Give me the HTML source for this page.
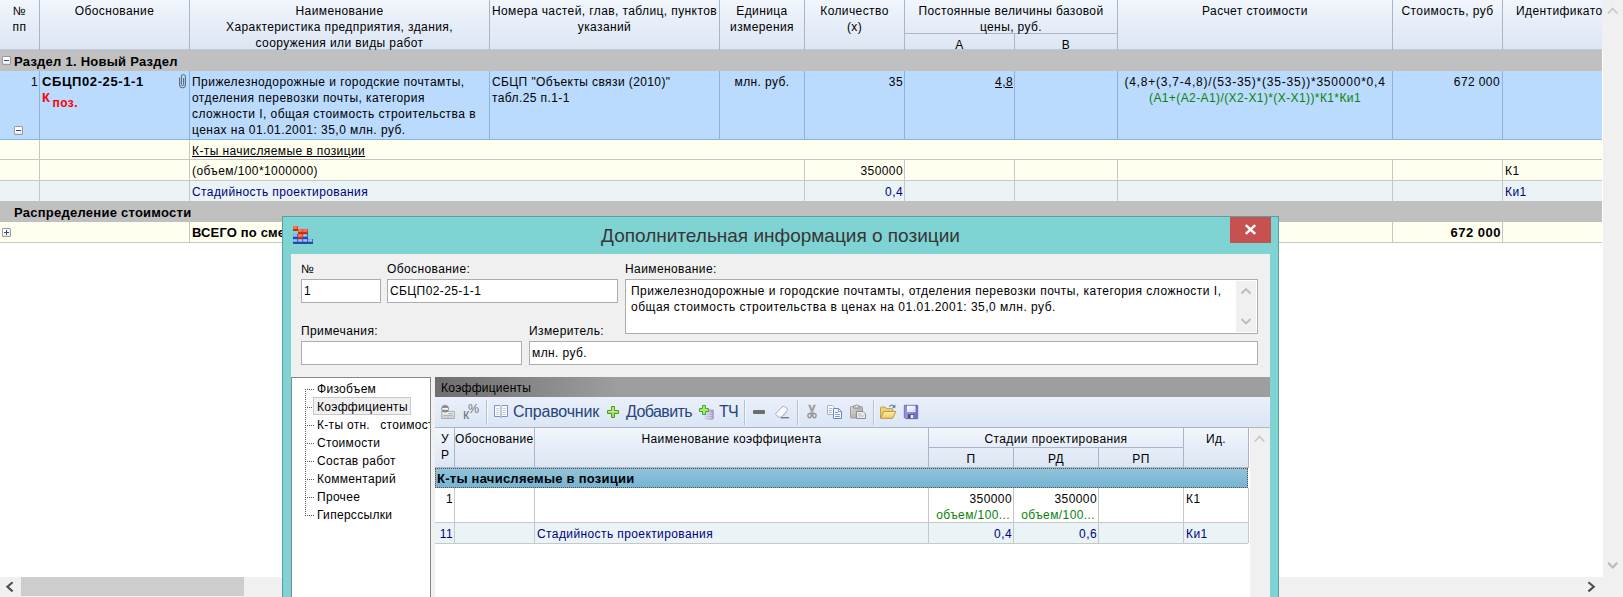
<!DOCTYPE html>
<html lang="ru">
<head>
<meta charset="utf-8">
<title>Дополнительная информация о позиции</title>
<style>
html,body{margin:0;padding:0;}
body{width:1623px;height:597px;overflow:hidden;background:#fff;position:relative;font-family:"Liberation Sans",sans-serif;font-size:12px;color:#000;letter-spacing:0.4px;}
.a{position:absolute;}
.t{position:absolute;white-space:nowrap;line-height:16px;}
.b{font-weight:bold;font-size:13px;letter-spacing:0.5px;}
.c{text-align:center;}
.r{text-align:right;}
.vl{position:absolute;width:1px;}
.hl{position:absolute;height:1px;}
.navy{color:#000080;}
.green{color:#0a820a;}
.pm{position:absolute;width:7px;height:7px;border:1px solid #9a9a9a;background:linear-gradient(#fff 55%,#e4e4e4);border-radius:1px;}
.pm i{position:absolute;left:1px;top:3px;width:5px;height:1px;background:#3048a0;}
.pm b{position:absolute;left:3px;top:1px;width:1px;height:5px;background:#3048a0;}
.inp{position:absolute;background:#fff;border:1px solid #abadb3;box-sizing:border-box;}
</style>
</head>
<body>

<!-- ================= MAIN GRID ================= -->
<div id="grid" class="a" style="left:0;top:0;width:1603px;height:577px;background:#fff;overflow:hidden;">
  <!-- header -->
  <div class="a" style="left:0;top:0;width:1602px;height:50px;background:linear-gradient(#f2f6fc,#e6edf8 50%,#dce6f3);"></div>
  <div class="hl" style="left:0;top:49px;width:1602px;background:#bcc8dc;"></div>
  <div class="vl" style="left:39px;top:0;height:50px;background:#a9b6ca;"></div>
  <div class="vl" style="left:189px;top:0;height:50px;background:#a9b6ca;"></div>
  <div class="vl" style="left:489px;top:0;height:50px;background:#a9b6ca;"></div>
  <div class="vl" style="left:719px;top:0;height:50px;background:#a9b6ca;"></div>
  <div class="vl" style="left:804px;top:0;height:50px;background:#a9b6ca;"></div>
  <div class="vl" style="left:904px;top:0;height:50px;background:#a9b6ca;"></div>
  <div class="vl" style="left:1014px;top:33px;height:17px;background:#a9b6ca;"></div>
  <div class="vl" style="left:1117px;top:0;height:50px;background:#a9b6ca;"></div>
  <div class="vl" style="left:1392px;top:0;height:50px;background:#a9b6ca;"></div>
  <div class="vl" style="left:1502px;top:0;height:50px;background:#a9b6ca;"></div>
  <div class="hl" style="left:904px;top:33px;width:213px;background:#a9b6ca;"></div>

  <div class="a" style="left:1602px;top:0;width:1px;height:50px;background:#f0f0f0;"></div>
  <div class="t c" style="left:0;top:3px;width:39px;white-space:normal;">№<br>пп</div>
  <div class="t c" style="left:40px;top:3px;width:149px;">Обоснование</div>
  <div class="t c" style="left:190px;top:3px;width:299px;">Наименование<br>Характеристика предприятия, здания,<br>сооружения или виды работ</div>
  <div class="t c" style="left:490px;top:3px;width:229px;">Номера частей, глав, таблиц, пунктов<br>указаний</div>
  <div class="t c" style="left:720px;top:3px;width:84px;">Единица<br>измерения</div>
  <div class="t c" style="left:805px;top:3px;width:99px;">Количество<br>(x)</div>
  <div class="t c" style="left:905px;top:3px;width:212px;">Постоянные величины базовой<br>цены, руб.</div>
  <div class="t c" style="left:905px;top:37px;width:109px;">А</div>
  <div class="t c" style="left:1015px;top:37px;width:102px;">В</div>
  <div class="t c" style="left:1118px;top:3px;width:274px;">Расчет стоимости</div>
  <div class="t c" style="left:1393px;top:3px;width:109px;">Стоимость, руб</div>
  <div class="t" style="left:1516px;top:3px;">Идентификатор</div>

  <!-- section row -->
  <div class="a" style="left:0;top:50px;width:1602px;height:21px;background:#c0c0c0;"></div>
  <div class="pm" style="left:2px;top:56px;"><i></i></div>
  <div class="t b" style="left:14px;top:54px;letter-spacing:0.25px;">Раздел 1. Новый Раздел</div>

  <!-- selected row -->
  <div class="a" style="left:0;top:71px;width:1602px;height:69px;background:#badbfd;"></div>
  <div class="hl" style="left:0;top:139px;width:1602px;background:#8db2dc;"></div>
  <div class="vl" style="left:39px;top:71px;height:69px;background:#8db2dc;"></div>
  <div class="vl" style="left:189px;top:71px;height:69px;background:#8db2dc;"></div>
  <div class="vl" style="left:489px;top:71px;height:69px;background:#8db2dc;"></div>
  <div class="vl" style="left:719px;top:71px;height:69px;background:#8db2dc;"></div>
  <div class="vl" style="left:804px;top:71px;height:69px;background:#8db2dc;"></div>
  <div class="vl" style="left:904px;top:71px;height:69px;background:#8db2dc;"></div>
  <div class="vl" style="left:1014px;top:71px;height:69px;background:#8db2dc;"></div>
  <div class="vl" style="left:1117px;top:71px;height:69px;background:#8db2dc;"></div>
  <div class="vl" style="left:1392px;top:71px;height:69px;background:#8db2dc;"></div>
  <div class="vl" style="left:1502px;top:71px;height:69px;background:#8db2dc;"></div>

  <div class="t r" style="left:0;top:74px;width:38px;">1</div>
  <div class="pm" style="left:14px;top:126px;"><i></i></div>
  <div class="t b" style="left:42px;top:74px;letter-spacing:0.6px;">СБЦП02-25-1-1</div>
  <div class="t b" style="left:42px;top:90px;color:#ff0000;">К<span style="font-size:12px;position:relative;top:5px;left:2px;">поз.</span></div>
  <svg class="a" style="left:178px;top:73px;" width="10" height="16" viewBox="0 0 10 16"><path d="M1.6 4.6 V12 A2.9 2.9 0 0 0 7.4 12 V3.6 A2 2 0 0 0 3.4 3.6 V11.6 A1.1 1.1 0 0 0 5.6 11.6 V5" fill="none" stroke="#4c5c6e" stroke-width="0.95"/></svg>
  <div class="t" style="left:192px;top:74px;letter-spacing:0.46px;">Прижелезнодорожные и городские почтамты,<br>отделения перевозки почты, категория<br>сложности I, общая стоимость строительства в<br>ценах на 01.01.2001: 35,0 млн. руб.</div>
  <div class="t" style="left:492px;top:74px;">СБЦП "Объекты связи (2010)"<br>табл.25 п.1-1</div>
  <div class="t c" style="left:720px;top:74px;width:84px;">млн. руб.</div>
  <div class="t r" style="left:805px;top:74px;width:98px;">35</div>
  <div class="t r" style="left:905px;top:74px;width:108px;text-decoration:underline;">4,8</div>
  <div class="t c" style="left:1118px;top:74px;width:274px;"><span style="letter-spacing:0.78px;">(4,8+(3,7-4,8)/(53-35)*(35-35))*350000*0,4</span><br><span class="green">(А1+(А2-А1)/(Х2-Х1)*(Х-Х1))*К1*Ки1</span></div>
  <div class="t r" style="left:1393px;top:74px;width:107px;">672 000</div>

  <!-- K-ty row -->
  <div class="a" style="left:0;top:140px;width:1602px;height:20px;background:#fffff0;"></div>
  <div class="hl" style="left:0;top:159px;width:1602px;background:#c6c6c6;"></div>
  <div class="vl" style="left:39px;top:140px;height:20px;background:#c6c6c6;"></div>
  <div class="vl" style="left:189px;top:140px;height:20px;background:#c6c6c6;"></div>
  <div class="t" style="left:192px;top:143px;text-decoration:underline;">К-ты начисляемые в позиции</div>

  <!-- objem row -->
  <div class="a" style="left:0;top:160px;width:1602px;height:21px;background:#fffff0;"></div>
  <div class="hl" style="left:0;top:180px;width:1602px;background:#c6c6c6;"></div>
  <div class="t" style="left:192px;top:163px;">(объем/100*1000000)</div>
  <div class="t r" style="left:805px;top:163px;width:98px;">350000</div>
  <div class="t" style="left:1505px;top:163px;">К1</div>

  <!-- stadiynost row -->
  <div class="a" style="left:0;top:181px;width:1602px;height:20px;background:#eaf4f6;"></div>
  <div class="t navy" style="left:192px;top:184px;">Стадийность проектирования</div>
  <div class="t r navy" style="left:805px;top:184px;width:98px;">0,4</div>
  <div class="t navy" style="left:1505px;top:184px;">Ки1</div>

  <!-- vertical lines for the two rows -->
  <div class="vl" style="left:39px;top:160px;height:41px;background:#c6c6c6;"></div>
  <div class="vl" style="left:189px;top:160px;height:41px;background:#c6c6c6;"></div>
  <div class="vl" style="left:804px;top:160px;height:41px;background:#c6c6c6;"></div>
  <div class="vl" style="left:904px;top:160px;height:41px;background:#c6c6c6;"></div>
  <div class="vl" style="left:1014px;top:160px;height:41px;background:#c6c6c6;"></div>
  <div class="vl" style="left:1117px;top:160px;height:41px;background:#c6c6c6;"></div>
  <div class="vl" style="left:1392px;top:160px;height:41px;background:#c6c6c6;"></div>
  <div class="vl" style="left:1502px;top:160px;height:41px;background:#c6c6c6;"></div>

  <!-- raspredelenie row -->
  <div class="a" style="left:0;top:201px;width:1602px;height:21px;background:#c0c0c0;"></div>
  <div class="t b" style="left:14px;top:205px;letter-spacing:0.25px;">Распределение стоимости</div>

  <!-- vsego row -->
  <div class="a" style="left:0;top:222px;width:1602px;height:21px;background:#fffff0;"></div>
  <div class="hl" style="left:0;top:242px;width:1602px;background:#c6c6c6;"></div>
  <div class="vl" style="left:189px;top:222px;height:21px;background:#c6c6c6;"></div>
  <div class="vl" style="left:1392px;top:222px;height:21px;background:#c6c6c6;"></div>
  <div class="vl" style="left:1502px;top:222px;height:21px;background:#c6c6c6;"></div>
  <div class="pm" style="left:2px;top:228px;"><i></i><b></b></div>
  <div class="t b" style="left:192px;top:225px;letter-spacing:0.15px;">ВСЕГО по смете</div>
  <div class="t b r" style="left:1393px;top:225px;width:108px;">672 000</div>
</div>

<!-- main scrollbars -->
<div class="a" style="left:1603px;top:0;width:20px;height:597px;background:#f0f0f0;"></div>
<div class="a" style="left:0;top:577px;width:1623px;height:20px;background:#f0f0f0;"></div>
<div class="a" style="left:21px;top:577px;width:223px;height:19px;background:#cdcdcd;"></div>
<svg class="a" style="left:1602px;top:0" width="21" height="20" viewBox="0 0 21 20"><path d="M6 13.5 L10.7 8.5 L15.4 13.5" fill="none" stroke="#c6c6c6" stroke-width="1.7"/></svg>
<svg class="a" style="left:1602px;top:555px" width="21" height="20" viewBox="0 0 21 20"><path d="M6.2 7.7 L10.7 12.6 L15.2 7.7" fill="none" stroke="#b8b8b8" stroke-width="2"/></svg>
<svg class="a" style="left:0;top:577px" width="20" height="20" viewBox="0 0 20 20"><path d="M12.6 5.2 L7.4 9.8 L12.6 14.4" fill="none" stroke="#4c4c4c" stroke-width="2.1"/></svg>
<svg class="a" style="left:1581px;top:577px" width="20" height="20" viewBox="0 0 20 20"><path d="M7.4 5.2 L12.8 9.8 L7.4 14.4" fill="none" stroke="#4c4c4c" stroke-width="2.1"/></svg>

<!-- ================= DIALOG ================= -->
<div id="dlg" class="a" style="left:282px;top:216px;width:997px;height:400px;background:#7fd3d3;box-sizing:border-box;border:1px solid #5a9ea0;">
</div>
<div id="dlgc" class="a" style="left:0;top:0;width:1623px;height:597px;overflow:hidden;">
  <!-- title -->
  <div class="t c" style="left:283px;top:225px;width:995px;font-size:19px;line-height:22px;letter-spacing:0;color:#363636;">Дополнительная информация о позиции</div>
  <!-- close -->
  <div class="a" style="left:1230px;top:217px;width:41px;height:26px;background:#c75050;"></div>
  <svg class="a" style="left:1244px;top:224px" width="13" height="11" viewBox="0 0 13 11"><path d="M1.8 1.2 L11.2 9.8 M11.2 1.2 L1.8 9.8" stroke="#fff" stroke-width="2.5" fill="none"/></svg>
  <!-- app icon -->
  <svg class="a" style="left:293px;top:226px" width="20" height="18" viewBox="0 0 20 18"><rect x="0" y="0" width="5" height="5" fill="#c82808"/><rect x="0" y="0" width="4.6" height="3.2" fill="#f4603c"/><rect x="0.6" y="0.6" width="3" height="1.6" fill="#fa8064"/><rect x="5" y="3" width="5" height="5" fill="#c82808"/><rect x="5" y="3" width="4.6" height="3.2" fill="#f4603c"/><rect x="5.6" y="3.6" width="3" height="1.6" fill="#fa8064"/><rect x="10" y="3" width="5" height="5" fill="#c82808"/><rect x="10" y="3" width="4.6" height="3.2" fill="#f4603c"/><rect x="10.6" y="3.6" width="3" height="1.6" fill="#fa8064"/><rect x="0" y="8" width="5" height="5" fill="#244c9c"/><rect x="0" y="8" width="4.4" height="3" fill="#6c98f0"/><rect x="0.5" y="8.5" width="3.4" height="1.6" fill="#a4c4fc"/><rect x="5" y="8" width="5" height="5" fill="#c82808"/><rect x="5" y="8" width="4.6" height="3.2" fill="#f4603c"/><rect x="5.6" y="8.6" width="3" height="1.6" fill="#fa8064"/><rect x="10" y="8" width="5" height="5" fill="#244c9c"/><rect x="10" y="8" width="4.4" height="3" fill="#6c98f0"/><rect x="10.5" y="8.5" width="3.4" height="1.6" fill="#a4c4fc"/><rect x="0" y="13" width="5" height="5" fill="#244c9c"/><rect x="0" y="13" width="4.4" height="3" fill="#6c98f0"/><rect x="0.5" y="13.5" width="3.4" height="1.6" fill="#a4c4fc"/><rect x="5" y="13" width="5" height="5" fill="#244c9c"/><rect x="5" y="13" width="4.4" height="3" fill="#6c98f0"/><rect x="5.5" y="13.5" width="3.4" height="1.6" fill="#a4c4fc"/><rect x="10" y="13" width="5" height="5" fill="#244c9c"/><rect x="10" y="13" width="4.4" height="3" fill="#6c98f0"/><rect x="10.5" y="13.5" width="3.4" height="1.6" fill="#a4c4fc"/><rect x="15" y="13" width="5" height="5" fill="#244c9c"/><rect x="15" y="13" width="4.4" height="3" fill="#6c98f0"/><rect x="15.5" y="13.5" width="3.4" height="1.6" fill="#a4c4fc"/></svg>

  <!-- client -->
  <div class="a" style="left:291px;top:254px;width:979px;height:343px;background:#f0f0f0;"></div>

  <!-- form labels / inputs -->
  <div class="t" style="left:301px;top:261px;">№</div>
  <div class="t" style="left:387px;top:261px;">Обоснование:</div>
  <div class="t" style="left:625px;top:261px;">Наименование:</div>
  <div class="inp" style="left:301px;top:279px;width:80px;height:24px;"></div>
  <div class="t" style="left:304px;top:283px;">1</div>
  <div class="inp" style="left:387px;top:279px;width:231px;height:24px;"></div>
  <div class="t" style="left:390px;top:283px;">СБЦП02-25-1-1</div>
  <div class="inp" style="left:625px;top:279px;width:633px;height:55px;"></div>
  <div class="a" style="left:1236px;top:281px;width:20px;height:51px;background:#f0f0f0;"></div>
  <svg class="a" style="left:1236px;top:281px" width="20" height="20" viewBox="0 0 20 20"><path d="M5.5 12.5 L10 8 L14.5 12.5" fill="none" stroke="#bcbcbc" stroke-width="1.9"/></svg>
  <svg class="a" style="left:1236px;top:311px" width="20" height="20" viewBox="0 0 20 20"><path d="M5.5 8 L10 12.5 L14.5 8" fill="none" stroke="#bcbcbc" stroke-width="1.9"/></svg>
  <div class="t" style="left:631px;top:283px;letter-spacing:0.49px;">Прижелезнодорожные и городские почтамты, отделения перевозки почты, категория сложности I,<br>общая стоимость строительства в ценах на 01.01.2001: 35,0 млн. руб.</div>
  <div class="t" style="left:301px;top:323px;">Примечания:</div>
  <div class="t" style="left:529px;top:323px;">Измеритель:</div>
  <div class="inp" style="left:301px;top:341px;width:221px;height:24px;"></div>
  <div class="inp" style="left:529px;top:341px;width:729px;height:24px;"></div>
  <div class="t" style="left:532px;top:345px;">млн. руб.</div>

  <!-- tree panel -->
  <div class="a" style="left:291px;top:377px;width:140px;height:230px;background:#fff;border:1px solid #828790;box-sizing:border-box;overflow:hidden;">
    <div class="vl" style="left:13px;top:11px;height:127px;background:repeating-linear-gradient(#5a5a5a 0 1px,transparent 1px 2px);"></div>
    <div class="hl" style="left:13px;top:11px;width:9px;background:repeating-linear-gradient(90deg,#5a5a5a 0 1px,transparent 1px 2px);"></div>
    <div class="hl" style="left:13px;top:29px;width:9px;background:repeating-linear-gradient(90deg,#5a5a5a 0 1px,transparent 1px 2px);"></div>
    <div class="hl" style="left:13px;top:47px;width:9px;background:repeating-linear-gradient(90deg,#5a5a5a 0 1px,transparent 1px 2px);"></div>
    <div class="hl" style="left:13px;top:65px;width:9px;background:repeating-linear-gradient(90deg,#5a5a5a 0 1px,transparent 1px 2px);"></div>
    <div class="hl" style="left:13px;top:83px;width:9px;background:repeating-linear-gradient(90deg,#5a5a5a 0 1px,transparent 1px 2px);"></div>
    <div class="hl" style="left:13px;top:101px;width:9px;background:repeating-linear-gradient(90deg,#5a5a5a 0 1px,transparent 1px 2px);"></div>
    <div class="hl" style="left:13px;top:119px;width:9px;background:repeating-linear-gradient(90deg,#5a5a5a 0 1px,transparent 1px 2px);"></div>
    <div class="hl" style="left:13px;top:137px;width:9px;background:repeating-linear-gradient(90deg,#5a5a5a 0 1px,transparent 1px 2px);"></div>
    <div class="a" style="left:21px;top:19px;width:98px;height:18px;background:#f0f0f0;border:1px solid #c8c8c8;box-sizing:border-box;"></div>
    <div class="t" style="left:25px;top:2px;line-height:18px;letter-spacing:0.3px;">Физобъем<br>Коэффициенты<br>К-ты отн.&nbsp; <span style="margin-left:3px">стоимости</span><br>Стоимости<br>Состав работ<br>Комментарий<br>Прочее<br>Гиперссылки</div>
  </div>

  <!-- right panel -->
  <div class="a" style="left:435px;top:377px;width:835px;height:20px;background:linear-gradient(90deg,#6f6f6f,#787878 40px,#9e9e9e 185px,#9e9e9e);"></div>
  <div class="t" style="left:441px;top:380px;letter-spacing:0.25px;">Коэффициенты</div>
  <!-- toolbar -->
  <div class="a" style="left:435px;top:397px;width:835px;height:31px;background:linear-gradient(#eaf0fa,#dbe5f4);"></div>
  <div class="hl" style="left:435px;top:427px;width:835px;background:#a9b6ca;"></div>
  <div id="tb">
    <!-- stamp icon (disabled) -->
    <svg class="a" style="left:440px;top:404px" width="16" height="16" viewBox="0 0 16 16">
      <defs><linearGradient id="crd" x1="0" x2="0" y1="0" y2="1"><stop offset="0" stop-color="#f6f6f6"/><stop offset="1" stop-color="#cfcfcf"/></linearGradient></defs>
      <rect x="1.7" y="7.6" width="12.6" height="6.8" fill="url(#crd)" stroke="#a4a4a4" stroke-width="0.9"/>
      <path d="M8.5 9.7 H12.6 M3.3 11.7 H12.6" stroke="#a0a0a0" stroke-width="0.9"/>
      <circle cx="5.1" cy="4.7" r="3.5" fill="#8e8e8e"/>
      <circle cx="5.1" cy="4.7" r="3.5" fill="none" stroke="#7c7c7c" stroke-width="0.6"/>
      <rect x="2.1" y="3.9" width="6" height="1.8" rx="0.6" fill="#fdfdfd"/>
    </svg>
    <!-- k% -->
    <div class="t" style="left:463px;top:406px;font-size:14px;color:#747474;letter-spacing:0;">к</div>
    <div class="t" style="left:468px;top:401px;font-size:12.5px;color:#747474;letter-spacing:0;">%</div>
    <div class="vl" style="left:486px;top:400px;height:25px;background:#b4c0d4;"></div>
    <div class="vl" style="left:487px;top:400px;height:25px;background:#f4f8fd;"></div>
    <!-- book -->
    <svg class="a" style="left:493px;top:404px" width="16" height="15" viewBox="0 0 16 15">
      <path d="M1.5 1.5 H7 L8 2.5 L9 1.5 H14.5 V12.5 H9 L8 13.5 L7 12.5 H1.5 Z" fill="#fbfbfd" stroke="#7c90d4" stroke-width="1"/>
      <path d="M8 2.5 V13" stroke="#8a94b8" stroke-width="1"/>
      <path d="M3 4.5 H6.5 M3 6.5 H6.5 M3 8.5 H6.5 M3 10.5 H6.5 M9.5 4.5 H13 M9.5 6.5 H13 M9.5 8.5 H13 M9.5 10.5 H13" stroke="#c0c4d4" stroke-width="0.8"/>
    </svg>
    <div class="t" style="left:513px;top:402px;font-size:16px;line-height:20px;color:#26457a;letter-spacing:-0.2px;">Справочник</div>
    <!-- green plus -->
    <svg class="a" style="left:607px;top:406px" width="12" height="12" viewBox="0 0 12 12"><path d="M4.5 0.5 H7.5 V4.5 H11.5 V7.5 H7.5 V11.5 H4.5 V7.5 H0.5 V4.5 H4.5 Z" fill="#9fdc62" stroke="#46a022" stroke-width="1" stroke-linejoin="round"/><path d="M5.3 1.4 H6.4 V5.3 H10.6 V5.9 H1.4 V5.3 H5.3 Z" fill="#d0f2a8"/></svg>
    <div class="t" style="left:626px;top:402px;font-size:16px;line-height:20px;color:#26457a;letter-spacing:-0.58px;">Добавить</div>
    <!-- plus + db -->
    <svg class="a" style="left:698px;top:404px" width="18" height="17" viewBox="0 0 18 17">
      <defs><linearGradient id="cyl" x1="0" x2="1" y1="0" y2="0"><stop offset="0" stop-color="#d8d6ee"/><stop offset="0.55" stop-color="#bcb8de"/><stop offset="1" stop-color="#8f8bbc"/></linearGradient></defs>
      <path d="M6.3 6.6 V14.2 Q6.3 15.8 11 15.8 Q15.7 15.8 15.7 14.2 V6.6 Q15.7 5.2 11 5.2 Q6.3 5.2 6.3 6.6 Z" fill="url(#cyl)"/>
      <path d="M7 9.2 H14.6 M7 11.4 H14.6 M7 13.6 H14.6" stroke="#e4e2f4" stroke-width="0.8" opacity="0.85"/>
      <path d="M4.5 1.5 H7.5 V4.5 H10.5 V7.5 H7.5 V10.5 H4.5 V7.5 H1.5 V4.5 H4.5 Z" fill="#a4ec78" stroke="#46a632" stroke-width="1" stroke-linejoin="round"/>
    </svg>
    <div class="t" style="left:719px;top:402px;font-size:16px;line-height:20px;color:#26457a;letter-spacing:-0.8px;">ТЧ</div>
    <div class="vl" style="left:744px;top:400px;height:25px;background:#b4c0d4;"></div>
    <div class="vl" style="left:745px;top:400px;height:25px;background:#f4f8fd;"></div>
    <!-- minus -->
    <div class="a" style="left:753px;top:410px;width:12px;height:4px;background:#6e6e6e;border-radius:1px;"></div>
    <!-- eraser -->
    <svg class="a" style="left:774px;top:404px" width="17" height="16" viewBox="0 0 17 16">
      <path d="M2 9.5 L8 3 Q9.2 1.8 10.6 2.6 L13 4.3 Q14 5.4 13 6.6 L7.5 12.8 Q6.2 13.8 4.8 13 L2.4 11.4 Q1.4 10.5 2 9.5 Z" fill="#fafafa" stroke="#98a4c4" stroke-width="0.9"/>
      <path d="M10.2 12 L13.4 8.2 L13 6.6 L7.5 12.8 Z" fill="#c4ccd8" opacity="0.8"/>
      <path d="M7 13.8 H15" stroke="#505058" stroke-width="1"/>
    </svg>
    <div class="vl" style="left:797px;top:400px;height:25px;background:#b4c0d4;"></div>
    <div class="vl" style="left:798px;top:400px;height:25px;background:#f4f8fd;"></div>
    <!-- scissors (disabled) -->
    <svg class="a" style="left:805px;top:404px" width="14" height="16" viewBox="0 0 14 16">
      <path d="M3.6 1 L5.2 1 L8.6 9.6 L7.2 10.4 Z M10.4 1 L8.8 1 L5.4 9.6 L6.8 10.4 Z" fill="#a6a6a6" stroke="#8e8e8e" stroke-width="0.5"/>
      <ellipse cx="4.6" cy="11.6" rx="1.7" ry="2.1" fill="none" stroke="#969696" stroke-width="1.4"/>
      <ellipse cx="9.4" cy="11.6" rx="1.7" ry="2.1" fill="none" stroke="#969696" stroke-width="1.4"/>
    </svg>
    <!-- copy -->
    <svg class="a" style="left:826px;top:404px" width="17" height="16" viewBox="0 0 17 16">
      <path d="M1.5 1.5 H6.5 L8.5 3.5 V10.5 H1.5 Z" fill="#fbfcfe" stroke="#a8b4cc" stroke-width="1"/>
      <path d="M3 4.5 H6.5 M3 6.5 H6 M3 8.5 H6" stroke="#9ab4e4" stroke-width="0.9"/>
      <path d="M7.5 4.5 H12.5 L15.5 7.5 V14.5 H7.5 Z" fill="#f8faff" stroke="#6a84cc" stroke-width="1"/>
      <path d="M12.3 4.6 V7.7 H15.4" fill="none" stroke="#6a84cc" stroke-width="0.8"/>
      <path d="M9 8.5 H12 M9 10.5 H14 M9 12.5 H14" stroke="#6c94e0" stroke-width="0.9"/>
    </svg>
    <!-- paste -->
    <svg class="a" style="left:849px;top:404px" width="18" height="16" viewBox="0 0 18 16">
      <defs><linearGradient id="pst" x1="0" x2="1" y1="0" y2="1"><stop offset="0" stop-color="#dcdcdc"/><stop offset="1" stop-color="#9c9c9c"/></linearGradient></defs>
      <rect x="1.5" y="2.5" width="12" height="11.5" rx="1" fill="url(#pst)" stroke="#9a9a9a" stroke-width="1"/>
      <path d="M4.5 4.2 V2.4 Q4.5 1.6 5.6 1.6 H6.2 Q7.5 -0.2 8.8 1.6 H9.4 Q10.5 1.6 10.5 2.4 V4.2 Z" fill="#c8c8c8" stroke="#858585" stroke-width="0.8"/>
      <circle cx="7.5" cy="2.3" r="0.7" fill="#f4f4f4"/>
      <path d="M7.5 7.5 H14 L16.5 10 V14.5 H7.5 Z" fill="#ececec" stroke="#8e8e8e" stroke-width="1"/>
      <path d="M9 10 H12.5 M9 12 H15" stroke="#b4b4b4" stroke-width="0.9"/>
    </svg>
    <div class="vl" style="left:873px;top:400px;height:25px;background:#b4c0d4;"></div>
    <div class="vl" style="left:874px;top:400px;height:25px;background:#f4f8fd;"></div>
    <!-- folder open -->
    <svg class="a" style="left:879px;top:403px" width="18" height="17" viewBox="0 0 18 17">
      <defs><linearGradient id="fld" x1="0" x2="0" y1="0" y2="1"><stop offset="0" stop-color="#fdeeb0"/><stop offset="1" stop-color="#f2c85c"/></linearGradient></defs>
      <path d="M1.5 15 V5 Q1.5 4 2.5 4 H6 L7.6 5.6 H13 Q13.8 5.6 13.8 6.4 V8.5" fill="#ecd07c" stroke="#c0a048" stroke-width="1"/>
      <path d="M1.6 15.3 L4.8 8.4 H16.8 L13.6 15.3 Z" fill="url(#fld)" stroke="#b8963c" stroke-width="1" stroke-linejoin="round"/>
      <path d="M10.2 3.6 Q12.8 0.6 15.6 3.8" fill="none" stroke="#6a88b8" stroke-width="1.1"/>
      <path d="M16.6 1.6 L16.2 5.2 L13 4.2 Z" fill="#5c7cb0"/>
    </svg>
    <!-- save -->
    <svg class="a" style="left:903px;top:404px" width="16" height="16" viewBox="0 0 16 16">
      <defs><linearGradient id="sv" x1="0" x2="1" y1="0" y2="0"><stop offset="0" stop-color="#9494e6"/><stop offset="1" stop-color="#6c6ccc"/></linearGradient>
      <linearGradient id="svl" x1="0" x2="1" y1="0" y2="1"><stop offset="0" stop-color="#ffffff"/><stop offset="1" stop-color="#d8d8ec"/></linearGradient></defs>
      <path d="M1.3 1.3 H14.7 V14.7 H2.6 L1.3 13.4 Z" fill="url(#sv)" stroke="#6060b8" stroke-width="0.8"/>
      <rect x="4" y="1.8" width="8.6" height="6.4" fill="url(#svl)"/>
      <rect x="13.3" y="2.2" width="0.8" height="1.2" fill="#5050a0"/>
      <rect x="5" y="10.4" width="6.2" height="3.8" fill="#4c4c5c"/>
      <rect x="7.6" y="11" width="2.8" height="3" fill="#f0f0f4"/>
    </svg>
  </div>

  <!-- inner grid -->
  <div class="a" style="left:435px;top:428px;width:835px;height:169px;background:#fff;"></div>
  <div class="a" style="left:435px;top:428px;width:813px;height:40px;background:linear-gradient(#f2f6fc,#e6edf8 50%,#dce6f3);"></div>
  <div class="vl" style="left:454px;top:428px;height:40px;background:#a9b6ca;"></div>
  <div class="vl" style="left:534px;top:428px;height:40px;background:#a9b6ca;"></div>
  <div class="vl" style="left:928px;top:428px;height:40px;background:#a9b6ca;"></div>
  <div class="vl" style="left:1013px;top:447px;height:21px;background:#a9b6ca;"></div>
  <div class="vl" style="left:1098px;top:447px;height:21px;background:#a9b6ca;"></div>
  <div class="vl" style="left:1183px;top:428px;height:40px;background:#a9b6ca;"></div>
  <div class="vl" style="left:1248px;top:428px;height:40px;background:#a9b6ca;"></div>
  <div class="hl" style="left:928px;top:447px;width:255px;background:#a9b6ca;"></div>
  <div class="hl" style="left:435px;top:467px;width:813px;background:#a9b6ca;"></div>
  <div class="t" style="left:441px;top:431px;">У<br>Р</div>
  <div class="t" style="left:455px;top:431px;letter-spacing:0.3px;">Обоснование</div>
  <div class="t c" style="left:535px;top:431px;width:393px;">Наименование коэффициента</div>
  <div class="t c" style="left:929px;top:431px;width:254px;">Стадии проектирования</div>
  <div class="t c" style="left:929px;top:451px;width:84px;">П</div>
  <div class="t c" style="left:1014px;top:451px;width:84px;">РД</div>
  <div class="t c" style="left:1099px;top:451px;width:84px;">РП</div>
  <div class="t c" style="left:1184px;top:431px;width:64px;">Ид.</div>
  <!-- inner scrollbar -->
  <div class="a" style="left:1250px;top:428px;width:20px;height:169px;background:#f0f0f0;"></div>
  <svg class="a" style="left:1249px;top:428px" width="21" height="20" viewBox="0 0 21 20"><path d="M5.8 13.5 L10.5 8.5 L15.2 13.5" fill="none" stroke="#c6c6c6" stroke-width="1.7"/></svg>
  <!-- group row -->
  <div class="a" style="left:435px;top:468px;width:813px;height:20px;background:linear-gradient(#92c4d8,#74b4d6);outline:1px dotted #6a4a3a;outline-offset:-1px;"></div>
  <div class="t b" style="left:437px;top:471px;letter-spacing:0.25px;">К-ты начисляемые в позиции</div>
  <!-- row 1 -->
  <div class="hl" style="left:435px;top:522px;width:813px;background:#c8c8c8;"></div>
  <div class="vl" style="left:454px;top:488px;height:55px;background:#c8c8c8;"></div>
  <div class="vl" style="left:534px;top:488px;height:55px;background:#c8c8c8;"></div>
  <div class="t r" style="left:436px;top:491px;width:17px;">1</div>
  <div class="t r" style="left:929px;top:491px;width:83px;">350000<br><span class="green" style="position:relative;left:-2px;">объем/100...</span></div>
  <div class="t r" style="left:1014px;top:491px;width:83px;">350000<br><span class="green" style="position:relative;left:-2px;">объем/100...</span></div>
  <div class="t" style="left:1186px;top:491px;">К1</div>
  <!-- row 2 -->
  <div class="a" style="left:435px;top:523px;width:813px;height:20px;background:#eaf4f6;"></div>
  <div class="hl" style="left:435px;top:543px;width:813px;background:#c8c8c8;"></div>
  <div class="vl" style="left:454px;top:488px;height:55px;background:#c8c8c8;"></div>
  <div class="vl" style="left:534px;top:488px;height:55px;background:#c8c8c8;"></div>
  <div class="vl" style="left:928px;top:488px;height:55px;background:#c8c8c8;"></div>
  <div class="vl" style="left:1013px;top:488px;height:55px;background:#c8c8c8;"></div>
  <div class="vl" style="left:1098px;top:488px;height:55px;background:#c8c8c8;"></div>
  <div class="vl" style="left:1183px;top:488px;height:55px;background:#c8c8c8;"></div>
  <div class="vl" style="left:1248px;top:488px;height:55px;background:#c8c8c8;"></div>
  <div class="t r navy" style="left:436px;top:526px;width:17px;">11</div>
  <div class="t navy" style="left:537px;top:526px;">Стадийность проектирования</div>
  <div class="t r navy" style="left:929px;top:526px;width:83px;">0,4</div>
  <div class="t r navy" style="left:1014px;top:526px;width:83px;">0,6</div>
  <div class="t navy" style="left:1186px;top:526px;">Ки1</div>
</div>

</body>
</html>
